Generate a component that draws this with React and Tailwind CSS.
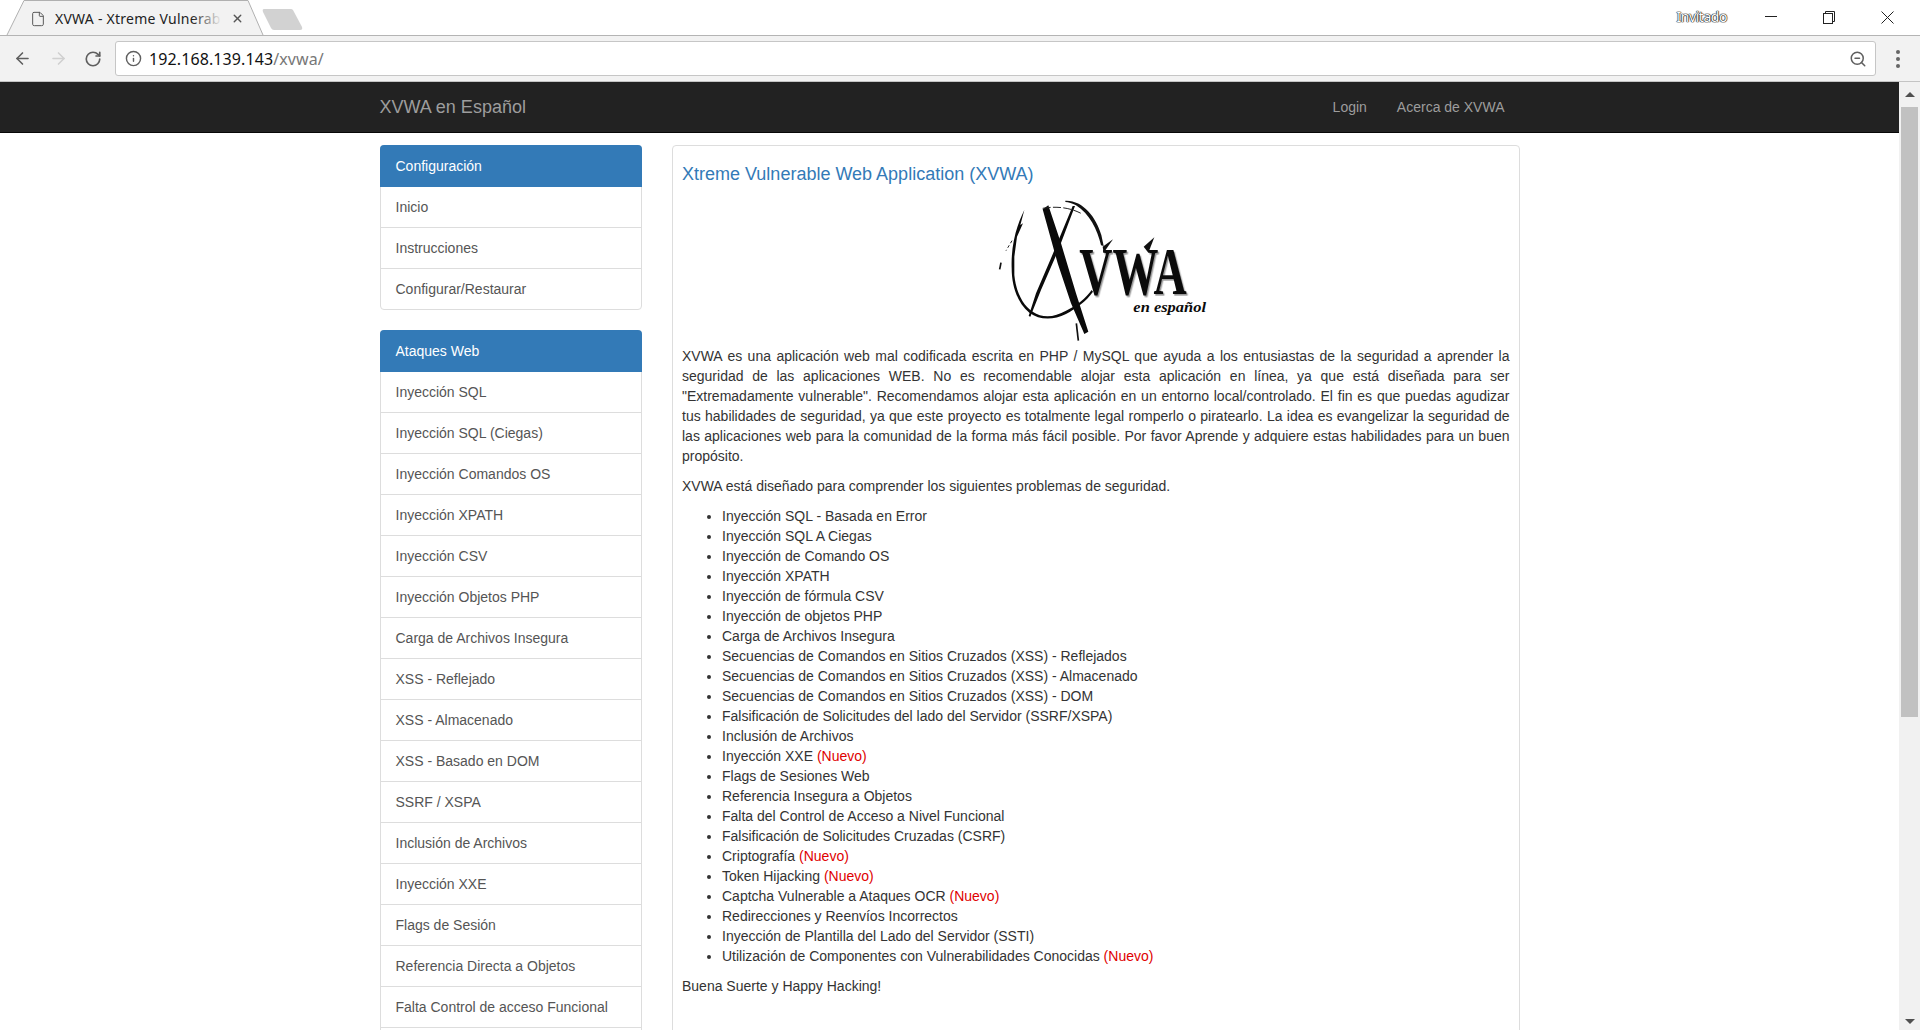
import React from "react";
import { ArrowLeft, ArrowRight, RotateCw, Info, ZoomOut, File, X } from "lucide-react";

const config = ["Inicio", "Instrucciones", "Configurar/Restaurar"];
const attacks = [
  "Inyección SQL", "Inyección SQL (Ciegas)", "Inyección Comandos OS", "Inyección XPATH", "Inyección CSV",
  "Inyección Objetos PHP", "Carga de Archivos Insegura", "XSS - Reflejado", "XSS - Almacenado", "XSS - Basado en DOM",
  "SSRF / XSPA", "Inclusión de Archivos", "Inyección XXE", "Flags de Sesión", "Referencia Directa a Objetos",
  "Falta Control de acceso Funcional", "Falsificación de Solicitudes",
];
const issues = [
  ["Inyección SQL - Basada en Error"], ["Inyección SQL A Ciegas"], ["Inyección de Comando OS"], ["Inyección XPATH"],
  ["Inyección de fórmula CSV"], ["Inyección de objetos PHP"], ["Carga de Archivos Insegura"],
  ["Secuencias de Comandos en Sitios Cruzados (XSS) - Reflejados"], ["Secuencias de Comandos en Sitios Cruzados (XSS) - Almacenado"],
  ["Secuencias de Comandos en Sitios Cruzados (XSS) - DOM"], ["Falsificación de Solicitudes del lado del Servidor (SSRF/XSPA)"],
  ["Inclusión de Archivos"], ["Inyección XXE", true], ["Flags de Sesiones Web"], ["Referencia Insegura a Objetos"],
  ["Falta del Control de Acceso a Nivel Funcional"], ["Falsificación de Solicitudes Cruzadas (CSRF)"], ["Criptografía", true],
  ["Token Hijacking", true], ["Captcha Vulnerable a Ataques OCR", true], ["Redirecciones y Reenvíos Incorrectos"],
  ["Inyección de Plantilla del Lado del Servidor (SSTI)"], ["Utilización de Componentes con Vulnerabilidades Conocidas", true],
];

function Panel({ title, items }) {
  return (
    <div className="mb-[20px] rounded-[4px] border border-[#ddd] bg-white">
      <div className="-mx-px -mt-px flex h-[42px] items-center rounded-t-[4px] bg-[#337ab7] px-[16px] pb-[1px] text-[14px] text-white">{title}</div>
      {items.map((t, i) => (
        <div key={t} className={`flex items-center px-[15px] text-[14px] text-[#555] ${i ? "h-[41px] border-t border-[#ddd]" : "h-[40px]"}`}>{t}</div>
      ))}
    </div>
  );
}

function Logo() {
  return (
    <svg viewBox="0 0 810 510" className="mx-auto block h-[170px] w-[270px]">
      <path d="M190 90 L178 135 L186 130 L168 170 L160 230 L160 285 C165 335 185 375 215 395 C245 415 280 412 315 392 C345 378 375 355 392 330 L396 335 C375 365 345 385 315 402 C275 422 235 420 205 398 C170 370 152 320 152 265 C150 210 160 150 190 90 Z" fill="#0a0a0a" />
      <path d="M313 62 C365 60 405 110 421 165 L428 198 L420 196 C410 150 385 100 345 76 C335 70 322 66 313 66 Z" fill="#111" />
      <path d="M245 88 L262 76 L300 190 L345 340 L382 455 L370 462 L330 370 L290 250 Z" fill="#0a0a0a" />
      <path d="M335 78 L342 78 L290 215 L240 330 L208 410 L203 408 L225 340 L270 235 Z" fill="#0a0a0a" />
      <path d="M245 85 C285 78 325 82 360 100" fill="none" stroke="#222" strokeWidth="3" strokeDasharray="24 7" />
      <path d="M153 182 L135 212" fill="none" stroke="#222" strokeWidth="3" strokeDasharray="9 7" />
      <path d="M120 248 L116 268" stroke="#111" strokeWidth="5" />
      <path d="M346 430 L352 482" stroke="#111" strokeWidth="5" />
      <text x="355" y="341" textLength="322" lengthAdjust="spacingAndGlyphs" fontFamily="'Liberation Serif', serif" fontWeight="700" fontSize="205" fill="#0b0b0b" className="[filter:drop-shadow(4px_5px_0_#9a9a9a)]">VWA</text>
      <path d="M425 200 L456 178 L428 218 Z" fill="#111" />
      <path d="M548 200 L580 172 L562 218 Z" fill="#111" />
      <text x="517" y="395" textLength="218" lengthAdjust="spacingAndGlyphs" fontFamily="'Liberation Serif', serif" fontStyle="italic" fontWeight="700" fontSize="44" fill="#0b0b0b">en español</text>
    </svg>
  );
}

export default function App() {
  return (
    <div className="flex h-[1030px] w-[1920px] flex-col overflow-hidden bg-white font-['Liberation_Sans',Arial,sans-serif] text-[14px] leading-[20px] text-[#333]">
      {/* tab strip */}
      <div className="flex h-[36px] shrink-0 items-start border-b border-[#b4b4b4] bg-white pl-[6px]">
        <div className="relative h-[36px] w-[258px] shrink-0">
          <svg className="absolute inset-0" width="258" height="36" viewBox="0 0 258 36">
            <path d="M1 35 L18 .5 L242 .5 L257 35" fill="#f2f2f2" stroke="#b0b0b0" />
          </svg>
          <div className="relative flex h-[36px] items-center pl-[24px] pt-[1px]">
            <File size={16} strokeWidth={1.5} className="text-[#5a5a5a]" />
            <div className="relative ml-[9px] w-[167px] overflow-hidden whitespace-nowrap font-['Noto_Sans',sans-serif] text-[14px] tracking-[0.25px] text-[#222]">
              XVWA - Xtreme Vulnerab
              <div className="absolute inset-y-0 right-0 w-[30px] bg-gradient-to-r from-transparent to-[#f2f2f2]" />
            </div>
            <X size={13} strokeWidth={2.5} className="ml-[9px] text-[#555]" />
          </div>
        </div>
        <svg className="ml-[-2px] mt-[9px] shrink-0" width="42" height="22" viewBox="0 0 42 22">
          <path d="M2 0 H29 Q30 0 31 1 L40 18 Q41 21 38 21 H12 Q10 21 9 19 L1 3 Q0 0 2 0Z" fill="#d2d2d2" />
        </svg>
        <div className="ml-auto flex h-[34px] items-center pr-[4px]">
          <span className="mr-[15px] font-['Noto_Sans',sans-serif] text-[14px] tracking-[-0.45px] text-white [text-shadow:0_0_1px_#222,0_0_1px_#222,0_0_1px_#222,0_0_1px_#222]">Invitado</span>
          <div className="flex w-[58px] justify-center">
            <svg width="12" height="2" viewBox="0 0 12 2"><path d="M0 .5 H12" stroke="#222" /></svg>
          </div>
          <div className="flex w-[58px] justify-center">
            <svg width="12" height="13" viewBox="0 0 12 13" fill="none" stroke="#222"><rect x=".5" y="2.5" width="9" height="10" /><path d="M2.5 2.5 V.5 H11.5 V10.5 H9.5" /></svg>
          </div>
          <div className="flex w-[58px] justify-center">
            <svg width="13" height="13" viewBox="0 0 13 13" stroke="#222" fill="none"><path d="M.5 .5 L12.5 12.5 M12.5 .5 L.5 12.5" /></svg>
          </div>
        </div>
      </div>

      {/* toolbar */}
      <div className="flex h-[46px] shrink-0 items-center border-b border-[#c4c4c4] bg-[#f2f2f2]">
        <div className="flex w-[115px] items-center justify-start pl-[13px]">
          <ArrowLeft size={19} strokeWidth={2} className="text-[#5f5f5f]" />
          <ArrowRight size={19} strokeWidth={2} className="ml-[17px] text-[#d0d0d0]" />
          <RotateCw size={18} strokeWidth={2.2} className="ml-[16px] text-[#5f5f5f]" />
        </div>
        <div className="flex h-[35px] w-[1761px] items-center rounded-[3px] border border-[#c6c6c6] bg-white pl-[9px] pr-[8px]">
          <Info size={17} strokeWidth={2} className="text-[#5f5f5f]" />
          <span className="ml-[7px] font-['Noto_Sans',sans-serif] text-[16px] tracking-[0.1px] text-[#111]">192.168.139.143<span className="text-[#777]">/xvwa/</span></span>
          <ZoomOut size={18} strokeWidth={2} className="ml-auto text-[#5f5f5f]" />
        </div>
        <div className="ml-[20px] flex flex-col gap-[3px]">
          <i className="block h-[4px] w-[4px] rounded-full bg-[#666]" />
          <i className="block h-[4px] w-[4px] rounded-full bg-[#666]" />
          <i className="block h-[4px] w-[4px] rounded-full bg-[#666]" />
        </div>
      </div>

      <div className="flex min-h-0 flex-1">
        {/* page */}
        <div className="min-w-0 flex-1">
          <div className="h-[51px] border-b border-[#080808] bg-[#222]">
            <div className="mx-auto flex h-[50px] w-[1170px] items-center justify-between pl-[15px] pr-[30px] text-[#9d9d9d]">
              <span className="text-[18px]">XVWA en Español</span>
              <div className="flex gap-[30px]">
                <span>Login</span>
                <span>Acerca de XVWA</span>
              </div>
            </div>
          </div>
          <div className="mx-auto mt-[12px] flex w-[1170px]">
            <div className="w-[292.5px] shrink-0 px-[15px]">
              <Panel title="Configuración" items={config} />
              <Panel title="Ataques Web" items={attacks} />
            </div>
            <div className="w-[877.5px] shrink-0 px-[15px]">
              <div className="h-[1200px] rounded-[4px] border border-[#ddd] bg-white p-[9px]">
                <h3 className="mt-[6px] text-[18px] leading-[26px] text-[#337ab7]">Xtreme Vulnerable Web Application (XVWA)</h3>
                <div className="mt-[-7px] h-[166px]"><Logo /></div>
                <p className="mb-[10px] text-justify">
                  XVWA es una aplicación web mal codificada escrita en PHP / MySQL que ayuda a los entusiastas de la seguridad a aprender la seguridad de las aplicaciones WEB. No es recomendable alojar esta aplicación en línea, ya que está diseñada para ser "Extremadamente vulnerable". Recomendamos alojar esta aplicación en un entorno local/controlado. El fin es que puedas agudizar tus habilidades de seguridad, ya que este proyecto es totalmente legal romperlo o piratearlo. La idea es evangelizar la seguridad de las aplicaciones web para la comunidad de la forma más fácil posible. Por favor Aprende y adquiere estas habilidades para un buen propósito.
                </p>
                <p className="mb-[10px]">XVWA está diseñado para comprender los siguientes problemas de seguridad.</p>
                <ul className="mb-[10px] list-disc pl-[40px]">
                  {issues.map(([t, n]) => (
                    <li key={t}>{t}{n && <span className="text-[#e00000]"> (Nuevo)</span>}</li>
                  ))}
                </ul>
                <p>Buena Suerte y Happy Hacking!</p>
              </div>
            </div>
          </div>
        </div>

        {/* scrollbar */}
        <div className="flex w-[21px] shrink-0 flex-col items-center bg-[#f1f1f1]">
          <div className="mt-[10px] h-0 w-0 border-x-[5px] border-b-[5px] border-x-transparent border-b-[#505050]" />
          <div className="mt-[10px] h-[610px] w-[17px] bg-[#c1c1c1]" />
          <div className="mt-auto mb-[6px] h-0 w-0 border-x-[5px] border-t-[5px] border-x-transparent border-t-[#505050]" />
        </div>
      </div>
    </div>
  );
}
